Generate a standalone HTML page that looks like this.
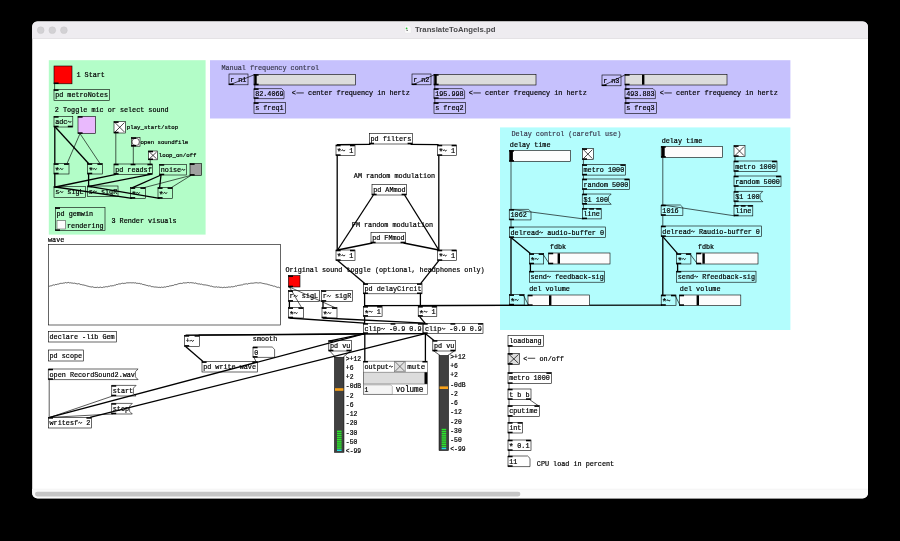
<!DOCTYPE html>
<html><head><meta charset="utf-8"><title>TranslateToAngels.pd</title>
<style>
html,body{margin:0;padding:0;background:#000;}
body{width:900px;height:541px;overflow:hidden;}
svg{display:block;}
text.m{font-family:"Liberation Mono",monospace;white-space:pre;}
svg{will-change:transform;}
text.s{font-family:"Liberation Sans",sans-serif;}
</style></head><body>
<svg width="900" height="541" viewBox="0 0 900 541">
<rect width="900" height="541" fill="#000"/>
<clipPath id="wc"><rect x="32.1" y="21.3" width="835.9" height="477.09999999999997" rx="5.5" ry="5.5"/></clipPath>
<g clip-path="url(#wc)">
<rect x="32.10" y="21.30" width="835.90" height="477.10" fill="#fff" />
<rect x="32.10" y="21.30" width="835.90" height="17.30" fill="#eeecf0" />
<rect x="32.10" y="38.20" width="835.90" height="0.60" fill="#d9d8db" />
<rect x="32.10" y="489.00" width="835.90" height="10.00" fill="#fafafa" />
<rect x="32.10" y="488.80" width="835.90" height="0.50" fill="#ededed" />
<rect x="35" y="491.7" width="485.4" height="4.8" rx="2.4" fill="#c6c6c6"/>
</g>
<circle cx="40.7" cy="30.2" r="3.4" fill="#d2d1d4" stroke="#c4c3c6" stroke-width="0.4"/>
<circle cx="52.3" cy="30.2" r="3.4" fill="#d2d1d4" stroke="#c4c3c6" stroke-width="0.4"/>
<circle cx="63.9" cy="30.2" r="3.4" fill="#d2d1d4" stroke="#c4c3c6" stroke-width="0.4"/>
<text class="s" x="415.00" y="32.20" font-size="7.7" fill="#4a4a4c" font-weight="bold" textLength="80.4" lengthAdjust="spacingAndGlyphs">TranslateToAngels.pd</text>
<path d="M405 25.8 h4 l2 2 v5.2 h-6z" fill="#fbfbfb" stroke="#e2e2e4" stroke-width="0.3"/>
<circle cx="406.6" cy="28.4" r="0.85" fill="#22c032"/>
<rect x="406.4" y="29.9" width="1.6" height="0.8" fill="#555"/>
<rect x="48.80" y="60.20" width="156.80" height="174.40" fill="#b3fdc8" />
<rect x="210.00" y="60.20" width="580.40" height="58.30" fill="#c6c1fd" />
<rect x="500.00" y="127.40" width="290.40" height="202.60" fill="#b3fdfd" />
<rect x="54.00" y="66.00" width="18.00" height="17.80" fill="#ff0000" stroke="#000" stroke-width="0.6" />
<rect x="53.80" y="82.50" width="4.80" height="1.50" fill="#000" />
<line x1="54.60" y1="84.00" x2="54.60" y2="89.50" stroke="#000" stroke-width="0.65"/>
<text class="m" transform="translate(76.45,76.60) scale(1,1.07)" font-size="6.78" fill="#000"  stroke="#000" stroke-width="0.2">1 Start</text>
<rect x="54.00" y="89.60" width="55.40" height="10.80" fill="none" stroke="#000" stroke-width="0.6" />
<rect x="53.80" y="89.40" width="4.80" height="1.50" fill="#000" />
<text class="m" transform="translate(55.15,97.10) scale(1,1.07)" font-size="6.78" fill="#000"  stroke="#000" stroke-width="0.2">pd metroNotes</text>
<text class="m" transform="translate(54.85,111.60) scale(1,1.07)" font-size="6.78" fill="#000"  stroke="#000" stroke-width="0.2">2 Toggle mic or select sound</text>
<rect x="54.00" y="116.40" width="18.80" height="10.60" fill="none" stroke="#000" stroke-width="0.6" />
<rect x="53.80" y="116.20" width="4.80" height="1.50" fill="#000" />
<rect x="53.80" y="125.70" width="4.80" height="1.50" fill="#000" />
<rect x="67.80" y="125.70" width="4.80" height="1.50" fill="#000" />
<path d="M67.71,122.30 C68.26,121.00 68.91,121.15 69.41,121.80 S70.56,122.60 71.11,121.30" fill="none" stroke="#000" stroke-width="1.00"/>
<text class="m" transform="translate(55.15,123.90) scale(1,1.07)" font-size="6.78" fill="#000"  stroke="#000" stroke-width="0.2">adc </text>
<rect x="78.00" y="116.40" width="17.60" height="17.20" fill="#e9b9fd" stroke="#000" stroke-width="0.6" />
<rect x="77.80" y="116.20" width="4.80" height="1.50" fill="#000" />
<rect x="77.80" y="132.30" width="4.80" height="1.50" fill="#000" />
<rect x="114.00" y="121.60" width="11.40" height="11.40" fill="#fff" stroke="#000" stroke-width="0.6" />
<line x1="115.00" y1="122.60" x2="124.40" y2="132.00" stroke="#000" stroke-width="0.7"/>
<line x1="115.00" y1="132.00" x2="124.40" y2="122.60" stroke="#000" stroke-width="0.7"/>
<rect x="113.80" y="121.40" width="4.80" height="1.50" fill="#000" />
<rect x="113.80" y="131.70" width="4.80" height="1.50" fill="#000" />
<text class="m" transform="translate(126.85,128.80) scale(1,1.07)" font-size="5.7" fill="#000"  stroke="#000" stroke-width="0.2">play_start/stop</text>
<rect x="131.40" y="137.60" width="8.60" height="8.60" fill="#fff" stroke="#000" stroke-width="0.6" />
<circle cx="135.70" cy="141.90" r="3.70" fill="#fff" stroke="#000" stroke-width="0.6"/>
<rect x="131.20" y="137.40" width="4.80" height="1.50" fill="#000" />
<rect x="131.20" y="144.90" width="4.80" height="1.50" fill="#000" />
<text class="m" transform="translate(140.45,143.60) scale(1,1.07)" font-size="5.7" fill="#000"  stroke="#000" stroke-width="0.2">open soundfile</text>
<rect x="148.40" y="151.00" width="9.20" height="8.80" fill="#fff" stroke="#000" stroke-width="0.6" />
<line x1="149.40" y1="152.00" x2="156.60" y2="158.80" stroke="#000" stroke-width="0.7"/>
<line x1="149.40" y1="158.80" x2="156.60" y2="152.00" stroke="#000" stroke-width="0.7"/>
<rect x="148.20" y="150.80" width="4.80" height="1.50" fill="#000" />
<rect x="148.20" y="158.50" width="4.80" height="1.50" fill="#000" />
<text class="m" transform="translate(158.85,156.60) scale(1,1.07)" font-size="5.7" fill="#000"  stroke="#000" stroke-width="0.2">loop_on/off</text>
<rect x="54.00" y="163.60" width="15.00" height="10.40" fill="none" stroke="#000" stroke-width="0.6" />
<rect x="53.80" y="163.40" width="4.80" height="1.50" fill="#000" />
<rect x="64.00" y="163.40" width="4.80" height="1.50" fill="#000" />
<rect x="53.80" y="172.70" width="4.80" height="1.50" fill="#000" />
<path d="M59.57,169.50 C60.12,168.20 60.77,168.35 61.27,169.00 S62.42,169.80 62.97,168.50" fill="none" stroke="#000" stroke-width="1.00"/>
<text class="m" transform="translate(55.15,171.10) scale(1,1.07)" font-size="6.78" fill="#000"  stroke="#000" stroke-width="0.2"><tspan dy="2.7" dx="-0.55" font-size="9">*</tspan><tspan dy="-2.7" dx="-0.8">​</tspan> </text>
<rect x="87.60" y="163.60" width="14.80" height="10.40" fill="none" stroke="#000" stroke-width="0.6" />
<rect x="87.40" y="163.40" width="4.80" height="1.50" fill="#000" />
<rect x="97.40" y="163.40" width="4.80" height="1.50" fill="#000" />
<rect x="87.40" y="172.70" width="4.80" height="1.50" fill="#000" />
<path d="M93.17,169.50 C93.72,168.20 94.37,168.35 94.87,169.00 S96.02,169.80 96.57,168.50" fill="none" stroke="#000" stroke-width="1.00"/>
<text class="m" transform="translate(88.75,171.10) scale(1,1.07)" font-size="6.78" fill="#000"  stroke="#000" stroke-width="0.2"><tspan dy="2.7" dx="-0.55" font-size="9">*</tspan><tspan dy="-2.7" dx="-0.8">​</tspan> </text>
<rect x="114.00" y="164.00" width="38.40" height="10.40" fill="none" stroke="#000" stroke-width="0.6" />
<rect x="113.80" y="163.80" width="4.80" height="1.50" fill="#000" />
<rect x="130.60" y="163.80" width="4.80" height="1.50" fill="#000" />
<rect x="147.40" y="163.80" width="4.80" height="1.50" fill="#000" />
<rect x="113.80" y="173.10" width="4.80" height="1.50" fill="#000" />
<rect x="147.40" y="173.10" width="4.80" height="1.50" fill="#000" />
<text class="m" transform="translate(115.15,171.50) scale(1,1.07)" font-size="6.78" fill="#000"  stroke="#000" stroke-width="0.2">pd readsf</text>
<rect x="159.60" y="164.40" width="26.80" height="10.60" fill="none" stroke="#000" stroke-width="0.6" />
<rect x="159.40" y="164.20" width="4.80" height="1.50" fill="#000" />
<rect x="159.40" y="173.70" width="4.80" height="1.50" fill="#000" />
<path d="M181.44,170.30 C181.99,169.00 182.64,169.15 183.14,169.80 S184.29,170.60 184.84,169.30" fill="none" stroke="#000" stroke-width="1.00"/>
<text class="m" transform="translate(160.75,171.90) scale(1,1.07)" font-size="6.78" fill="#000"  stroke="#000" stroke-width="0.2">noise </text>
<rect x="190.00" y="163.60" width="11.60" height="11.80" fill="#a0a0a0" stroke="#000" stroke-width="0.6" />
<rect x="189.80" y="163.40" width="4.80" height="1.50" fill="#000" />
<rect x="189.80" y="174.10" width="4.80" height="1.50" fill="#000" />
<rect x="54.00" y="186.60" width="31.40" height="10.80" fill="none" stroke="#000" stroke-width="0.6" />
<rect x="53.80" y="186.40" width="4.80" height="1.50" fill="#000" />
<path d="M59.57,192.50 C60.12,191.20 60.77,191.35 61.27,192.00 S62.42,192.80 62.97,191.50" fill="none" stroke="#000" stroke-width="1.00"/>
<text class="m" transform="translate(55.15,194.10) scale(1,1.07)" font-size="6.78" fill="#000"  stroke="#000" stroke-width="0.2">s  sigL</text>
<rect x="87.60" y="186.00" width="30.40" height="10.60" fill="none" stroke="#000" stroke-width="0.6" />
<rect x="87.40" y="185.80" width="4.80" height="1.50" fill="#000" />
<path d="M93.17,191.90 C93.72,190.60 94.37,190.75 94.87,191.40 S96.02,192.20 96.57,190.90" fill="none" stroke="#000" stroke-width="1.00"/>
<text class="m" transform="translate(88.75,193.50) scale(1,1.07)" font-size="6.78" fill="#000"  stroke="#000" stroke-width="0.2">s  sigR</text>
<rect x="130.60" y="187.60" width="14.80" height="10.80" fill="none" stroke="#000" stroke-width="0.6" />
<rect x="130.40" y="187.40" width="4.80" height="1.50" fill="#000" />
<rect x="140.40" y="187.40" width="4.80" height="1.50" fill="#000" />
<rect x="130.40" y="197.10" width="4.80" height="1.50" fill="#000" />
<path d="M136.17,193.50 C136.72,192.20 137.37,192.35 137.87,193.00 S139.02,193.80 139.57,192.50" fill="none" stroke="#000" stroke-width="1.00"/>
<text class="m" transform="translate(131.75,195.10) scale(1,1.07)" font-size="6.78" fill="#000"  stroke="#000" stroke-width="0.2"><tspan dy="2.7" dx="-0.55" font-size="9">*</tspan><tspan dy="-2.7" dx="-0.8">​</tspan> </text>
<rect x="158.00" y="187.60" width="14.60" height="10.80" fill="none" stroke="#000" stroke-width="0.6" />
<rect x="157.80" y="187.40" width="4.80" height="1.50" fill="#000" />
<rect x="167.60" y="187.40" width="4.80" height="1.50" fill="#000" />
<rect x="157.80" y="197.10" width="4.80" height="1.50" fill="#000" />
<path d="M163.57,193.50 C164.12,192.20 164.77,192.35 165.27,193.00 S166.42,193.80 166.97,192.50" fill="none" stroke="#000" stroke-width="1.00"/>
<text class="m" transform="translate(159.15,195.10) scale(1,1.07)" font-size="6.78" fill="#000"  stroke="#000" stroke-width="0.2"><tspan dy="2.7" dx="-0.55" font-size="9">*</tspan><tspan dy="-2.7" dx="-0.8">​</tspan> </text>
<line x1="54.80" y1="127.00" x2="54.80" y2="163.60" stroke="#000" stroke-width="1.3"/>
<line x1="55.20" y1="127.00" x2="88.80" y2="163.80" stroke="#000" stroke-width="1.3"/>
<line x1="80.00" y1="133.60" x2="67.00" y2="163.60" stroke="#000" stroke-width="0.65"/>
<line x1="80.00" y1="133.60" x2="100.00" y2="163.60" stroke="#000" stroke-width="0.65"/>
<line x1="115.80" y1="133.00" x2="115.80" y2="164.00" stroke="#000" stroke-width="0.65"/>
<line x1="133.30" y1="146.20" x2="133.30" y2="164.00" stroke="#000" stroke-width="0.65"/>
<line x1="150.20" y1="159.80" x2="150.20" y2="164.00" stroke="#000" stroke-width="0.65"/>
<line x1="54.80" y1="174.00" x2="54.80" y2="186.60" stroke="#000" stroke-width="1.3"/>
<line x1="88.60" y1="174.00" x2="88.60" y2="186.00" stroke="#000" stroke-width="1.3"/>
<line x1="116.00" y1="174.40" x2="55.50" y2="187.00" stroke="#000" stroke-width="1.3"/>
<line x1="150.50" y1="174.40" x2="89.00" y2="186.40" stroke="#000" stroke-width="1.3"/>
<line x1="161.00" y1="175.00" x2="132.00" y2="187.80" stroke="#000" stroke-width="1.3"/>
<line x1="161.00" y1="175.00" x2="159.60" y2="187.80" stroke="#000" stroke-width="1.3"/>
<line x1="191.00" y1="175.40" x2="143.40" y2="187.80" stroke="#000" stroke-width="0.65"/>
<line x1="191.00" y1="175.40" x2="171.00" y2="187.80" stroke="#000" stroke-width="0.65"/>
<line x1="132.00" y1="198.40" x2="55.50" y2="187.00" stroke="#000" stroke-width="1.3"/>
<line x1="159.60" y1="198.40" x2="89.00" y2="186.40" stroke="#000" stroke-width="1.3"/>
<rect x="55.40" y="207.60" width="49.60" height="23.00" fill="none" stroke="#000" stroke-width="0.6" />
<rect x="55.20" y="207.40" width="4.80" height="1.50" fill="#000" />
<rect x="55.20" y="229.30" width="4.80" height="1.50" fill="#000" />
<text class="m" transform="translate(56.45,215.80) scale(1,1.07)" font-size="6.78" fill="#000"  stroke="#000" stroke-width="0.2">pd gemwin</text>
<rect x="57.00" y="220.60" width="8.60" height="8.40" fill="#fcfcfc" stroke="#555" stroke-width="0.6" />
<text class="m" transform="translate(67.05,228.10) scale(1,1.07)" font-size="6.78" fill="#000"  stroke="#000" stroke-width="0.2">rendering</text>
<text class="m" transform="translate(111.45,222.50) scale(1,1.07)" font-size="6.78" fill="#000"  stroke="#000" stroke-width="0.2">3 Render visuals</text>
<text class="m" transform="translate(48.05,241.80) scale(1,1.07)" font-size="6.78" fill="#000"  stroke="#000" stroke-width="0.2">wave</text>
<rect x="48.40" y="244.40" width="232.20" height="80.60" fill="#fff" stroke="#000" stroke-width="0.6" />
<polyline points="48.8,286.19 49.6,286.19 50.4,285.90 51.2,285.84 52.0,285.65 52.8,285.10 53.6,284.86 54.4,285.15 55.2,284.59 56.0,284.37 56.8,284.62 57.6,284.11 58.4,284.14 59.2,283.74 60.0,283.67 60.8,283.22 61.6,283.36 62.4,283.37 63.2,283.05 64.0,283.08 64.8,282.95 65.6,282.52 66.4,282.89 67.2,282.76 68.0,282.58 68.8,282.43 69.6,282.95 70.4,282.75 71.2,282.95 72.0,283.12 72.8,283.10 73.6,283.32 74.4,283.11 75.2,283.48 76.0,283.40 76.8,283.84 77.6,283.95 78.4,283.65 79.2,283.84 80.0,284.06 80.8,284.69 81.6,284.56 82.4,284.86 83.2,284.86 84.0,285.17 84.8,285.29 85.6,285.46 86.4,285.78 87.2,285.96 88.0,286.33 88.8,286.36 89.6,286.67 90.4,286.78 91.2,287.00 92.0,286.94 92.8,286.75 93.6,287.27 94.4,287.43 95.2,287.47 96.0,287.33 96.8,287.47 97.6,287.20 98.4,287.59 99.2,287.44 100.0,287.26 100.8,287.10 101.6,287.54 102.4,287.56 103.2,286.96 104.0,287.30 104.8,286.98 105.6,286.71 106.4,286.68 107.2,286.84 108.0,286.76 108.8,286.12 109.6,286.31 110.4,285.80 111.2,286.04 112.0,285.63 112.8,285.78 113.6,285.66 114.4,285.19 115.2,285.30 116.0,284.71 116.8,284.38 117.6,284.52 118.4,284.00 119.2,283.93 120.0,283.89 120.8,283.85 121.6,283.43 122.4,283.21 123.2,283.58 124.0,283.12 124.8,283.40 125.6,283.26 126.4,282.86 127.2,282.84 128.0,282.81 128.8,282.84 129.6,282.78 130.4,282.74 131.2,282.77 132.0,282.98 132.8,282.75 133.6,282.75 134.4,282.99 135.2,282.78 136.0,282.92 136.8,283.44 137.6,283.29 138.4,283.44 139.2,283.27 140.0,283.68 140.8,283.95 141.6,283.80 142.4,284.35 143.2,284.55 144.0,284.41 144.8,284.95 145.6,285.06 146.4,285.39 147.2,285.39 148.0,285.80 148.8,286.02 149.6,285.77 150.4,285.98 151.2,286.52 152.0,286.85 152.8,286.57 153.6,286.83 154.4,287.04 155.2,286.98 156.0,287.10 156.8,287.15 157.6,287.24 158.4,287.42 159.2,287.27 160.0,287.33 160.8,287.55 161.6,287.08 162.4,287.36 163.2,287.39 164.0,287.05 164.8,286.90 165.6,287.13 166.4,286.66 167.2,286.49 168.0,286.48 168.8,286.46 169.6,285.92 170.4,285.87 171.2,285.68 172.0,285.77 172.8,285.33 173.6,285.37 174.4,284.75 175.2,284.64 176.0,284.62 176.8,284.55 177.6,284.10 178.4,283.77 179.2,283.53 180.0,283.60 180.8,283.24 181.6,283.46 182.4,283.35 183.2,282.84 184.0,282.80 184.8,283.03 185.6,282.87 186.4,282.92 187.2,282.62 188.0,282.48 188.8,282.58 189.6,282.90 190.4,282.62 191.2,282.70 192.0,282.80 192.8,282.87 193.6,282.94 194.4,283.33 195.2,282.97 196.0,282.98 196.8,283.66 197.6,283.75 198.4,283.94 199.2,283.75 200.0,284.21 200.8,284.34 201.6,284.08 202.4,284.55 203.2,284.77 204.0,284.83 204.8,284.91 205.6,284.94 206.4,285.14 207.2,285.24 208.0,285.31 208.8,285.79 209.6,285.77 210.4,286.24 211.2,285.93 212.0,286.59 212.8,286.60 213.6,286.87 214.4,286.97 215.2,287.09 216.0,287.00 216.8,286.75 217.6,287.28 218.4,287.01 219.2,287.14 220.0,287.41 220.8,287.37 221.6,287.33 222.4,287.66 223.2,287.47 224.0,287.30 224.8,287.22 225.6,287.56 226.4,287.28 227.2,287.41 228.0,287.09 228.8,286.92 229.6,287.04 230.4,287.11 231.2,286.62 232.0,286.88 232.8,286.84 233.6,286.64 234.4,286.52 235.2,285.88 236.0,286.11 236.8,286.10 237.6,285.46 238.4,285.43 239.2,285.27 240.0,285.27 240.8,285.04 241.6,284.91 242.4,284.93 243.2,284.31 244.0,284.19 244.8,284.08 245.6,283.93 246.4,283.75 247.2,284.16 248.0,283.96 248.8,283.38 249.6,283.51 250.4,283.29 251.2,283.20 252.0,283.13 252.8,283.23 253.6,283.13 254.4,282.93 255.2,282.79 256.0,282.83 256.8,282.69 257.6,282.93 258.4,283.03 259.2,282.85 260.0,282.72 260.8,282.85 261.6,283.05 262.4,283.30 263.2,283.54 264.0,283.44 264.8,283.86 265.6,283.94 266.4,284.02 267.2,284.19 268.0,284.48 268.8,284.83 269.6,284.89 270.4,285.29 271.2,285.39 272.0,285.49 272.8,285.90 273.6,286.22 274.4,286.07 275.2,286.50 276.0,286.70 276.8,287.16 277.6,287.37 278.4,287.18 279.2,287.64 280.0,287.69" fill="none" stroke="#222" stroke-width="0.7"/>
<rect x="48.40" y="331.40" width="68.20" height="10.60" fill="none" stroke="#000" stroke-width="0.6" />
<text class="m" transform="translate(49.55,338.90) scale(1,1.07)" font-size="6.78" fill="#000"  stroke="#000" stroke-width="0.2">declare -lib Gem</text>
<rect x="48.40" y="350.00" width="35.00" height="11.00" fill="none" stroke="#000" stroke-width="0.6" />
<text class="m" transform="translate(49.55,357.50) scale(1,1.07)" font-size="6.78" fill="#000"  stroke="#000" stroke-width="0.2">pd scope</text>
<polygon points="48.40,369.00 138.10,369.00 135.40,371.70 135.40,376.90 138.10,379.60 48.40,379.60" fill="none" stroke="#000" stroke-width="0.6"/>
<rect x="48.20" y="368.80" width="4.80" height="1.50" fill="#000" />
<rect x="48.20" y="378.30" width="4.80" height="1.50" fill="#000" />
<text class="m" transform="translate(49.55,376.50) scale(1,1.07)" font-size="6.78" fill="#000"  stroke="#000" stroke-width="0.2">open RecordSound2.wav</text>
<polygon points="111.60,385.40 136.10,385.40 133.40,388.10 133.40,393.30 136.10,396.00 111.60,396.00" fill="none" stroke="#000" stroke-width="0.6"/>
<rect x="111.40" y="385.20" width="4.80" height="1.50" fill="#000" />
<rect x="111.40" y="394.70" width="4.80" height="1.50" fill="#000" />
<text class="m" transform="translate(112.75,392.90) scale(1,1.07)" font-size="6.78" fill="#000"  stroke="#000" stroke-width="0.2">start</text>
<polygon points="111.60,403.40 132.30,403.40 129.60,406.10 129.60,411.30 132.30,414.00 111.60,414.00" fill="none" stroke="#000" stroke-width="0.6"/>
<rect x="111.40" y="403.20" width="4.80" height="1.50" fill="#000" />
<rect x="111.40" y="412.70" width="4.80" height="1.50" fill="#000" />
<text class="m" transform="translate(112.75,410.90) scale(1,1.07)" font-size="6.78" fill="#000"  stroke="#000" stroke-width="0.2">stop</text>
<rect x="48.40" y="417.40" width="43.00" height="10.60" fill="none" stroke="#000" stroke-width="0.6" />
<rect x="48.20" y="417.20" width="4.80" height="1.50" fill="#000" />
<rect x="86.40" y="417.20" width="4.80" height="1.50" fill="#000" />
<path d="M78.38,423.30 C78.93,422.00 79.58,422.15 80.08,422.80 S81.23,423.60 81.78,422.30" fill="none" stroke="#000" stroke-width="1.00"/>
<text class="m" transform="translate(49.55,424.90) scale(1,1.07)" font-size="6.78" fill="#000"  stroke="#000" stroke-width="0.2">writesf  2</text>
<line x1="49.20" y1="379.60" x2="49.20" y2="417.40" stroke="#000" stroke-width="0.65"/>
<line x1="112.60" y1="396.00" x2="50.00" y2="417.40" stroke="#000" stroke-width="0.65"/>
<line x1="112.60" y1="414.00" x2="50.00" y2="417.40" stroke="#000" stroke-width="0.65"/>
<rect x="184.60" y="335.40" width="15.00" height="11.00" fill="none" stroke="#000" stroke-width="0.6" />
<rect x="184.40" y="335.20" width="4.80" height="1.50" fill="#000" />
<rect x="194.60" y="335.20" width="4.80" height="1.50" fill="#000" />
<rect x="184.40" y="345.10" width="4.80" height="1.50" fill="#000" />
<path d="M190.17,341.30 C190.72,340.00 191.37,340.15 191.87,340.80 S193.02,341.60 193.57,340.30" fill="none" stroke="#000" stroke-width="1.00"/>
<text class="m" transform="translate(185.75,342.90) scale(1,1.07)" font-size="6.78" fill="#000"  stroke="#000" stroke-width="0.2">+ </text>
<text class="m" transform="translate(252.85,340.60) scale(1,1.07)" font-size="6.78" fill="#000"  stroke="#000" stroke-width="0.2">smooth</text>
<polygon points="253.00,347.00 272.20,347.00 274.60,349.40 274.60,357.40 253.00,357.40" fill="none" stroke="#000" stroke-width="0.6"/>
<rect x="252.80" y="346.80" width="4.80" height="1.50" fill="#000" />
<rect x="252.80" y="356.10" width="4.80" height="1.50" fill="#000" />
<text class="m" transform="translate(254.15,354.50) scale(1,1.07)" font-size="6.78" fill="#000"  stroke="#000" stroke-width="0.2">0</text>
<rect x="202.00" y="361.60" width="55.40" height="10.40" fill="none" stroke="#000" stroke-width="0.6" />
<rect x="201.80" y="361.40" width="4.80" height="1.50" fill="#000" />
<rect x="252.40" y="361.40" width="4.80" height="1.50" fill="#000" />
<text class="m" transform="translate(203.15,369.10) scale(1,1.07)" font-size="6.78" fill="#000"  stroke="#000" stroke-width="0.2">pd write wave</text>
<line x1="185.60" y1="346.40" x2="203.00" y2="361.60" stroke="#000" stroke-width="1.3"/>
<line x1="254.00" y1="357.40" x2="256.00" y2="361.60" stroke="#000" stroke-width="0.65"/>
<text class="m" transform="translate(285.45,271.60) scale(1,1.07)" font-size="6.78" fill="#000"  stroke="#000" stroke-width="0.2">Original sound toggle (optional, headphones only)</text>
<rect x="288.40" y="275.60" width="11.60" height="11.40" fill="#ff0000" stroke="#000" stroke-width="0.6" />
<rect x="288.20" y="275.40" width="4.80" height="1.50" fill="#000" />
<rect x="288.20" y="285.70" width="4.80" height="1.50" fill="#000" />
<rect x="288.40" y="290.60" width="31.00" height="10.80" fill="none" stroke="#000" stroke-width="0.6" />
<rect x="288.20" y="290.40" width="4.80" height="1.50" fill="#000" />
<rect x="288.20" y="300.10" width="4.80" height="1.50" fill="#000" />
<path d="M293.97,296.50 C294.52,295.20 295.17,295.35 295.67,296.00 S296.82,296.80 297.37,295.50" fill="none" stroke="#000" stroke-width="1.00"/>
<text class="m" transform="translate(289.55,298.10) scale(1,1.07)" font-size="6.78" fill="#000"  stroke="#000" stroke-width="0.2">r  sigL</text>
<rect x="321.60" y="290.60" width="30.80" height="10.80" fill="none" stroke="#000" stroke-width="0.6" />
<rect x="321.40" y="290.40" width="4.80" height="1.50" fill="#000" />
<rect x="321.40" y="300.10" width="4.80" height="1.50" fill="#000" />
<path d="M327.17,296.50 C327.72,295.20 328.37,295.35 328.87,296.00 S330.02,296.80 330.57,295.50" fill="none" stroke="#000" stroke-width="1.00"/>
<text class="m" transform="translate(322.75,298.10) scale(1,1.07)" font-size="6.78" fill="#000"  stroke="#000" stroke-width="0.2">r  sigR</text>
<rect x="288.40" y="307.60" width="15.00" height="10.40" fill="none" stroke="#000" stroke-width="0.6" />
<rect x="288.20" y="307.40" width="4.80" height="1.50" fill="#000" />
<rect x="298.40" y="307.40" width="4.80" height="1.50" fill="#000" />
<rect x="288.20" y="316.70" width="4.80" height="1.50" fill="#000" />
<path d="M293.97,313.50 C294.52,312.20 295.17,312.35 295.67,313.00 S296.82,313.80 297.37,312.50" fill="none" stroke="#000" stroke-width="1.00"/>
<text class="m" transform="translate(289.55,315.10) scale(1,1.07)" font-size="6.78" fill="#000"  stroke="#000" stroke-width="0.2"><tspan dy="2.7" dx="-0.55" font-size="9">*</tspan><tspan dy="-2.7" dx="-0.8">​</tspan> </text>
<rect x="322.00" y="307.60" width="15.00" height="10.40" fill="none" stroke="#000" stroke-width="0.6" />
<rect x="321.80" y="307.40" width="4.80" height="1.50" fill="#000" />
<rect x="332.00" y="307.40" width="4.80" height="1.50" fill="#000" />
<rect x="321.80" y="316.70" width="4.80" height="1.50" fill="#000" />
<path d="M327.57,313.50 C328.12,312.20 328.77,312.35 329.27,313.00 S330.42,313.80 330.97,312.50" fill="none" stroke="#000" stroke-width="1.00"/>
<text class="m" transform="translate(323.15,315.10) scale(1,1.07)" font-size="6.78" fill="#000"  stroke="#000" stroke-width="0.2"><tspan dy="2.7" dx="-0.55" font-size="9">*</tspan><tspan dy="-2.7" dx="-0.8">​</tspan> </text>
<line x1="289.40" y1="287.00" x2="301.60" y2="307.60" stroke="#000" stroke-width="0.65"/>
<line x1="289.40" y1="287.00" x2="335.00" y2="307.60" stroke="#000" stroke-width="0.65"/>
<line x1="289.40" y1="301.40" x2="289.40" y2="307.60" stroke="#000" stroke-width="1.3"/>
<line x1="323.00" y1="301.40" x2="323.00" y2="307.60" stroke="#000" stroke-width="1.3"/>
<rect x="369.40" y="133.60" width="43.20" height="10.40" fill="none" stroke="#000" stroke-width="0.6" />
<rect x="369.20" y="142.70" width="4.80" height="1.50" fill="#000" />
<rect x="407.60" y="142.70" width="4.80" height="1.50" fill="#000" />
<text class="m" transform="translate(370.55,141.10) scale(1,1.07)" font-size="6.78" fill="#000"  stroke="#000" stroke-width="0.2">pd filters</text>
<rect x="336.00" y="145.00" width="19.00" height="10.60" fill="none" stroke="#000" stroke-width="0.6" />
<rect x="335.80" y="144.80" width="4.80" height="1.50" fill="#000" />
<rect x="350.00" y="144.80" width="4.80" height="1.50" fill="#000" />
<rect x="335.80" y="154.30" width="4.80" height="1.50" fill="#000" />
<path d="M341.57,150.90 C342.12,149.60 342.77,149.75 343.27,150.40 S344.42,151.20 344.97,149.90" fill="none" stroke="#000" stroke-width="1.00"/>
<text class="m" transform="translate(337.15,152.50) scale(1,1.07)" font-size="6.78" fill="#000"  stroke="#000" stroke-width="0.2"><tspan dy="2.7" dx="-0.55" font-size="9">*</tspan><tspan dy="-2.7" dx="-0.8">​</tspan>  1</text>
<rect x="437.60" y="145.00" width="19.00" height="10.60" fill="none" stroke="#000" stroke-width="0.6" />
<rect x="437.40" y="144.80" width="4.80" height="1.50" fill="#000" />
<rect x="451.60" y="144.80" width="4.80" height="1.50" fill="#000" />
<rect x="437.40" y="154.30" width="4.80" height="1.50" fill="#000" />
<path d="M443.17,150.90 C443.72,149.60 444.37,149.75 444.87,150.40 S446.02,151.20 446.57,149.90" fill="none" stroke="#000" stroke-width="1.00"/>
<text class="m" transform="translate(438.75,152.50) scale(1,1.07)" font-size="6.78" fill="#000"  stroke="#000" stroke-width="0.2"><tspan dy="2.7" dx="-0.55" font-size="9">*</tspan><tspan dy="-2.7" dx="-0.8">​</tspan>  1</text>
<text class="m" transform="translate(353.85,178.00) scale(1,1.07)" font-size="6.78" fill="#000"  stroke="#000" stroke-width="0.2">AM random modulation</text>
<rect x="372.00" y="184.40" width="34.60" height="10.60" fill="none" stroke="#000" stroke-width="0.6" />
<rect x="371.80" y="193.70" width="4.80" height="1.50" fill="#000" />
<rect x="401.60" y="193.70" width="4.80" height="1.50" fill="#000" />
<text class="m" transform="translate(373.15,191.90) scale(1,1.07)" font-size="6.78" fill="#000"  stroke="#000" stroke-width="0.2">pd AMmod</text>
<text class="m" transform="translate(351.85,226.60) scale(1,1.07)" font-size="6.78" fill="#000"  stroke="#000" stroke-width="0.2">FM random modulation</text>
<rect x="371.00" y="232.60" width="34.60" height="10.40" fill="none" stroke="#000" stroke-width="0.6" />
<rect x="370.80" y="241.70" width="4.80" height="1.50" fill="#000" />
<rect x="400.60" y="241.70" width="4.80" height="1.50" fill="#000" />
<text class="m" transform="translate(372.15,240.10) scale(1,1.07)" font-size="6.78" fill="#000"  stroke="#000" stroke-width="0.2">pd FMmod</text>
<rect x="336.00" y="250.00" width="19.00" height="10.60" fill="none" stroke="#000" stroke-width="0.6" />
<rect x="335.80" y="249.80" width="4.80" height="1.50" fill="#000" />
<rect x="350.00" y="249.80" width="4.80" height="1.50" fill="#000" />
<rect x="335.80" y="259.30" width="4.80" height="1.50" fill="#000" />
<path d="M341.57,255.90 C342.12,254.60 342.77,254.75 343.27,255.40 S344.42,256.20 344.97,254.90" fill="none" stroke="#000" stroke-width="1.00"/>
<text class="m" transform="translate(337.15,257.50) scale(1,1.07)" font-size="6.78" fill="#000"  stroke="#000" stroke-width="0.2"><tspan dy="2.7" dx="-0.55" font-size="9">*</tspan><tspan dy="-2.7" dx="-0.8">​</tspan>  1</text>
<rect x="437.60" y="250.00" width="19.00" height="10.60" fill="none" stroke="#000" stroke-width="0.6" />
<rect x="437.40" y="249.80" width="4.80" height="1.50" fill="#000" />
<rect x="451.60" y="249.80" width="4.80" height="1.50" fill="#000" />
<rect x="437.40" y="259.30" width="4.80" height="1.50" fill="#000" />
<path d="M443.17,255.90 C443.72,254.60 444.37,254.75 444.87,255.40 S446.02,256.20 446.57,254.90" fill="none" stroke="#000" stroke-width="1.00"/>
<text class="m" transform="translate(438.75,257.50) scale(1,1.07)" font-size="6.78" fill="#000"  stroke="#000" stroke-width="0.2"><tspan dy="2.7" dx="-0.55" font-size="9">*</tspan><tspan dy="-2.7" dx="-0.8">​</tspan>  1</text>
<rect x="363.40" y="283.60" width="58.60" height="10.20" fill="none" stroke="#000" stroke-width="0.6" />
<rect x="363.20" y="283.40" width="4.80" height="1.50" fill="#000" />
<rect x="417.00" y="283.40" width="4.80" height="1.50" fill="#000" />
<rect x="363.20" y="292.50" width="4.80" height="1.50" fill="#000" />
<rect x="417.00" y="292.50" width="4.80" height="1.50" fill="#000" />
<text class="m" transform="translate(364.55,291.10) scale(1,1.07)" font-size="6.78" fill="#000"  stroke="#000" stroke-width="0.2">pd delayCircit</text>
<rect x="363.40" y="306.30" width="18.70" height="10.10" fill="none" stroke="#000" stroke-width="0.6" />
<rect x="363.20" y="306.10" width="4.80" height="1.50" fill="#000" />
<rect x="377.10" y="306.10" width="4.80" height="1.50" fill="#000" />
<rect x="363.20" y="315.10" width="4.80" height="1.50" fill="#000" />
<path d="M368.97,312.20 C369.52,310.90 370.17,311.05 370.67,311.70 S371.82,312.50 372.37,311.20" fill="none" stroke="#000" stroke-width="1.00"/>
<text class="m" transform="translate(364.55,313.80) scale(1,1.07)" font-size="6.78" fill="#000"  stroke="#000" stroke-width="0.2"><tspan dy="2.7" dx="-0.55" font-size="9">*</tspan><tspan dy="-2.7" dx="-0.8">​</tspan>  1</text>
<rect x="418.20" y="306.30" width="18.60" height="10.10" fill="none" stroke="#000" stroke-width="0.6" />
<rect x="418.00" y="306.10" width="4.80" height="1.50" fill="#000" />
<rect x="431.80" y="306.10" width="4.80" height="1.50" fill="#000" />
<rect x="418.00" y="315.10" width="4.80" height="1.50" fill="#000" />
<path d="M423.77,312.20 C424.32,310.90 424.97,311.05 425.47,311.70 S426.62,312.50 427.17,311.20" fill="none" stroke="#000" stroke-width="1.00"/>
<text class="m" transform="translate(419.35,313.80) scale(1,1.07)" font-size="6.78" fill="#000"  stroke="#000" stroke-width="0.2"><tspan dy="2.7" dx="-0.55" font-size="9">*</tspan><tspan dy="-2.7" dx="-0.8">​</tspan>  1</text>
<rect x="363.40" y="323.40" width="59.50" height="10.20" fill="none" stroke="#000" stroke-width="0.6" />
<rect x="363.20" y="323.20" width="4.80" height="1.50" fill="#000" />
<rect x="390.55" y="323.20" width="4.80" height="1.50" fill="#000" />
<rect x="417.90" y="323.20" width="4.80" height="1.50" fill="#000" />
<rect x="363.20" y="332.30" width="4.80" height="1.50" fill="#000" />
<path d="M381.17,329.30 C381.72,328.00 382.37,328.15 382.87,328.80 S384.02,329.60 384.57,328.30" fill="none" stroke="#000" stroke-width="1.00"/>
<text class="m" transform="translate(364.55,330.90) scale(1,1.07)" font-size="6.78" fill="#000"  stroke="#000" stroke-width="0.2">clip  -0.9 0.9</text>
<rect x="423.10" y="323.40" width="59.90" height="10.20" fill="none" stroke="#000" stroke-width="0.6" />
<rect x="422.90" y="323.20" width="4.80" height="1.50" fill="#000" />
<rect x="450.45" y="323.20" width="4.80" height="1.50" fill="#000" />
<rect x="478.00" y="323.20" width="4.80" height="1.50" fill="#000" />
<rect x="422.90" y="332.30" width="4.80" height="1.50" fill="#000" />
<path d="M441.57,329.30 C442.12,328.00 442.77,328.15 443.27,328.80 S444.42,329.60 444.97,328.30" fill="none" stroke="#000" stroke-width="1.00"/>
<text class="m" transform="translate(424.95,330.90) scale(1,1.07)" font-size="6.78" fill="#000"  stroke="#000" stroke-width="0.2">clip  -0.9 0.9</text>
<rect x="328.80" y="340.60" width="22.60" height="10.40" fill="none" stroke="#000" stroke-width="0.6" />
<rect x="328.60" y="340.40" width="4.80" height="1.50" fill="#000" />
<rect x="328.60" y="349.70" width="4.80" height="1.50" fill="#000" />
<rect x="346.40" y="349.70" width="4.80" height="1.50" fill="#000" />
<text class="m" transform="translate(329.95,348.10) scale(1,1.07)" font-size="6.78" fill="#000"  stroke="#000" stroke-width="0.2">pd vu</text>
<rect x="432.80" y="340.40" width="22.60" height="10.60" fill="none" stroke="#000" stroke-width="0.6" />
<rect x="432.60" y="340.20" width="4.80" height="1.50" fill="#000" />
<rect x="432.60" y="349.70" width="4.80" height="1.50" fill="#000" />
<rect x="450.40" y="349.70" width="4.80" height="1.50" fill="#000" />
<text class="m" transform="translate(433.95,347.90) scale(1,1.07)" font-size="6.78" fill="#000"  stroke="#000" stroke-width="0.2">pd vu</text>
<line x1="370.40" y1="144.40" x2="337.00" y2="144.60" stroke="#000" stroke-width="1.3"/>
<line x1="410.60" y1="144.40" x2="438.60" y2="144.60" stroke="#000" stroke-width="1.3"/>
<line x1="337.20" y1="155.60" x2="337.20" y2="250.00" stroke="#000" stroke-width="1.3"/>
<line x1="438.80" y1="155.60" x2="438.80" y2="250.00" stroke="#000" stroke-width="1.3"/>
<line x1="373.40" y1="195.00" x2="337.60" y2="250.00" stroke="#000" stroke-width="1.3"/>
<line x1="404.60" y1="195.00" x2="438.80" y2="250.00" stroke="#000" stroke-width="1.3"/>
<line x1="372.40" y1="243.00" x2="337.60" y2="250.00" stroke="#000" stroke-width="1.3"/>
<line x1="403.60" y1="243.00" x2="438.80" y2="250.00" stroke="#000" stroke-width="1.3"/>
<line x1="337.60" y1="260.60" x2="364.80" y2="283.60" stroke="#000" stroke-width="1.3"/>
<line x1="438.80" y1="260.60" x2="420.60" y2="283.60" stroke="#000" stroke-width="1.3"/>
<line x1="364.60" y1="293.80" x2="364.60" y2="306.40" stroke="#000" stroke-width="1.3"/>
<line x1="420.40" y1="293.80" x2="420.40" y2="306.40" stroke="#000" stroke-width="1.3"/>
<line x1="364.60" y1="316.80" x2="364.60" y2="323.40" stroke="#000" stroke-width="1.3"/>
<line x1="419.80" y1="316.80" x2="425.20" y2="323.40" stroke="#000" stroke-width="1.3"/>
<line x1="289.40" y1="318.00" x2="364.60" y2="323.20" stroke="#000" stroke-width="1.3"/>
<line x1="323.00" y1="318.00" x2="425.20" y2="323.20" stroke="#000" stroke-width="1.3"/>
<line x1="510.60" y1="305.30" x2="364.60" y2="305.70" stroke="#000" stroke-width="1.3"/>
<line x1="662.00" y1="305.20" x2="420.00" y2="305.60" stroke="#000" stroke-width="1.3"/>
<line x1="364.80" y1="333.60" x2="185.60" y2="335.20" stroke="#000" stroke-width="1.3"/>
<line x1="425.20" y1="333.60" x2="198.60" y2="335.20" stroke="#000" stroke-width="1.3"/>
<line x1="364.80" y1="333.60" x2="49.60" y2="417.40" stroke="#000" stroke-width="1.3"/>
<line x1="425.20" y1="333.60" x2="90.00" y2="417.40" stroke="#000" stroke-width="1.3"/>
<line x1="364.80" y1="333.60" x2="330.00" y2="340.80" stroke="#000" stroke-width="1.3"/>
<line x1="425.20" y1="333.60" x2="434.00" y2="340.60" stroke="#000" stroke-width="1.3"/>
<line x1="364.80" y1="333.60" x2="364.80" y2="361.20" stroke="#000" stroke-width="1.3"/>
<line x1="425.40" y1="333.60" x2="425.40" y2="361.20" stroke="#000" stroke-width="1.3"/>
<rect x="334.40" y="357.20" width="9.60" height="95.20" fill="#404040" stroke="#000" stroke-width="0.5" />
<rect x="335.00" y="388.20" width="8.40" height="2.60" fill="#f9a21a" />
<rect x="337.00" y="430.60" width="4.60" height="1.50" fill="#2be62b" />
<rect x="337.00" y="432.70" width="4.60" height="1.50" fill="#2be62b" />
<rect x="337.00" y="434.80" width="4.60" height="1.50" fill="#2be62b" />
<rect x="337.00" y="436.90" width="4.60" height="1.50" fill="#2be62b" />
<rect x="337.00" y="439.00" width="4.60" height="1.50" fill="#2be62b" />
<rect x="337.00" y="441.10" width="4.60" height="1.50" fill="#2be62b" />
<rect x="337.00" y="443.20" width="4.60" height="1.50" fill="#2be62b" />
<rect x="337.00" y="445.30" width="4.60" height="1.50" fill="#2be62b" />
<rect x="337.00" y="447.40" width="4.60" height="1.50" fill="#2be62b" />
<rect x="337.00" y="449.50" width="4.60" height="1.50" fill="#1fe0e0" />
<text class="m" transform="translate(345.85,360.60) scale(1,1.07)" font-size="6.4" fill="#000"  stroke="#000" stroke-width="0.2">&gt;+12</text>
<text class="m" transform="translate(345.85,369.86) scale(1,1.07)" font-size="6.4" fill="#000"  stroke="#000" stroke-width="0.2">+6</text>
<text class="m" transform="translate(345.85,379.12) scale(1,1.07)" font-size="6.4" fill="#000"  stroke="#000" stroke-width="0.2">+2</text>
<text class="m" transform="translate(345.85,388.38) scale(1,1.07)" font-size="6.4" fill="#000"  stroke="#000" stroke-width="0.2">-0dB</text>
<text class="m" transform="translate(345.85,397.64) scale(1,1.07)" font-size="6.4" fill="#000"  stroke="#000" stroke-width="0.2">-2</text>
<text class="m" transform="translate(345.85,406.90) scale(1,1.07)" font-size="6.4" fill="#000"  stroke="#000" stroke-width="0.2">-6</text>
<text class="m" transform="translate(345.85,416.16) scale(1,1.07)" font-size="6.4" fill="#000"  stroke="#000" stroke-width="0.2">-12</text>
<text class="m" transform="translate(345.85,425.42) scale(1,1.07)" font-size="6.4" fill="#000"  stroke="#000" stroke-width="0.2">-20</text>
<text class="m" transform="translate(345.85,434.68) scale(1,1.07)" font-size="6.4" fill="#000"  stroke="#000" stroke-width="0.2">-30</text>
<text class="m" transform="translate(345.85,443.94) scale(1,1.07)" font-size="6.4" fill="#000"  stroke="#000" stroke-width="0.2">-50</text>
<text class="m" transform="translate(345.85,453.20) scale(1,1.07)" font-size="6.4" fill="#000"  stroke="#000" stroke-width="0.2">&lt;-99</text>
<rect x="439.00" y="355.40" width="9.60" height="95.20" fill="#404040" stroke="#000" stroke-width="0.5" />
<rect x="439.60" y="386.40" width="8.40" height="2.60" fill="#f9a21a" />
<rect x="441.60" y="428.80" width="4.60" height="1.50" fill="#2be62b" />
<rect x="441.60" y="430.90" width="4.60" height="1.50" fill="#2be62b" />
<rect x="441.60" y="433.00" width="4.60" height="1.50" fill="#2be62b" />
<rect x="441.60" y="435.10" width="4.60" height="1.50" fill="#2be62b" />
<rect x="441.60" y="437.20" width="4.60" height="1.50" fill="#2be62b" />
<rect x="441.60" y="439.30" width="4.60" height="1.50" fill="#2be62b" />
<rect x="441.60" y="441.40" width="4.60" height="1.50" fill="#2be62b" />
<rect x="441.60" y="443.50" width="4.60" height="1.50" fill="#2be62b" />
<rect x="441.60" y="445.60" width="4.60" height="1.50" fill="#2be62b" />
<rect x="441.60" y="447.70" width="4.60" height="1.50" fill="#1fe0e0" />
<text class="m" transform="translate(450.25,358.80) scale(1,1.07)" font-size="6.4" fill="#000"  stroke="#000" stroke-width="0.2">&gt;+12</text>
<text class="m" transform="translate(450.25,368.06) scale(1,1.07)" font-size="6.4" fill="#000"  stroke="#000" stroke-width="0.2">+6</text>
<text class="m" transform="translate(450.25,377.32) scale(1,1.07)" font-size="6.4" fill="#000"  stroke="#000" stroke-width="0.2">+2</text>
<text class="m" transform="translate(450.25,386.58) scale(1,1.07)" font-size="6.4" fill="#000"  stroke="#000" stroke-width="0.2">-0dB</text>
<text class="m" transform="translate(450.25,395.84) scale(1,1.07)" font-size="6.4" fill="#000"  stroke="#000" stroke-width="0.2">-2</text>
<text class="m" transform="translate(450.25,405.10) scale(1,1.07)" font-size="6.4" fill="#000"  stroke="#000" stroke-width="0.2">-6</text>
<text class="m" transform="translate(450.25,414.36) scale(1,1.07)" font-size="6.4" fill="#000"  stroke="#000" stroke-width="0.2">-12</text>
<text class="m" transform="translate(450.25,423.62) scale(1,1.07)" font-size="6.4" fill="#000"  stroke="#000" stroke-width="0.2">-20</text>
<text class="m" transform="translate(450.25,432.88) scale(1,1.07)" font-size="6.4" fill="#000"  stroke="#000" stroke-width="0.2">-30</text>
<text class="m" transform="translate(450.25,442.14) scale(1,1.07)" font-size="6.4" fill="#000"  stroke="#000" stroke-width="0.2">-50</text>
<text class="m" transform="translate(450.25,451.40) scale(1,1.07)" font-size="6.4" fill="#000"  stroke="#000" stroke-width="0.2">&lt;-99</text>
<line x1="329.80" y1="351.00" x2="335.40" y2="357.20" stroke="#000" stroke-width="0.65"/>
<line x1="350.40" y1="351.00" x2="343.20" y2="357.20" stroke="#000" stroke-width="0.65"/>
<line x1="433.80" y1="351.00" x2="440.00" y2="355.40" stroke="#000" stroke-width="0.65"/>
<line x1="454.40" y1="351.00" x2="447.80" y2="355.40" stroke="#000" stroke-width="0.65"/>
<rect x="363.40" y="361.20" width="64.00" height="33.40" fill="#fff" />
<path d="M389.21,367.00 C389.76,365.70 390.41,365.85 390.91,366.50 S392.06,367.30 392.61,366.00" fill="none" stroke="#000" stroke-width="1.00"/>
<text class="m" transform="translate(364.45,368.60) scale(1,1.07)" font-size="6.78" fill="#000"  stroke="#000" stroke-width="0.2">output </text>
<rect x="394.60" y="361.30" width="10.60" height="10.50" fill="#e0e0e0" stroke="#6a6a6a" stroke-width="0.6" />
<line x1="395.40" y1="362.00" x2="404.40" y2="371.00" stroke="#333" stroke-width="0.6"/>
<line x1="395.40" y1="371.00" x2="404.40" y2="362.00" stroke="#333" stroke-width="0.6"/>
<text class="m" transform="translate(407.25,368.50) scale(1,1.07)" font-size="7.5" fill="#000"  stroke="#000" stroke-width="0.2">mute</text>
<rect x="363.40" y="372.20" width="64.00" height="11.80" fill="#dcdcdc" stroke="#6a6a6a" stroke-width="0.6" />
<rect x="424.50" y="372.30" width="2.90" height="11.60" fill="#000" />
<polygon points="363.6,384.9 390.8,384.9 392.3,386.4 392.3,394.4 363.6,394.4" fill="#f5f5f5" stroke="#8a8a8a" stroke-width="0.55"/>
<text class="m" transform="translate(364.45,391.60) scale(1,1.07)" font-size="6.4" fill="#000"  stroke="#000" stroke-width="0.2">1</text>
<text class="m" transform="translate(395.65,391.60) scale(1,1.07)" font-size="7.7" fill="#000"  stroke="#000" stroke-width="0.2">volume</text>
<rect x="363.40" y="361.20" width="64.00" height="33.40" fill="none" stroke="#6a6a6a" stroke-width="0.7" />
<rect x="363.20" y="361.00" width="4.80" height="1.50" fill="#000" />
<rect x="422.40" y="361.00" width="4.80" height="1.50" fill="#000" />
<text class="m" transform="translate(221.45,70.00) scale(1,1.07)" font-size="6.78" fill="#3b3b50"  stroke="#3b3b50" stroke-width="0.2">Manual frequency control</text>
<rect x="229.00" y="74.00" width="19.00" height="10.80" fill="none" stroke="#000" stroke-width="0.6" />
<rect x="228.80" y="83.50" width="4.80" height="1.50" fill="#000" />
<text class="m" transform="translate(230.15,81.50) scale(1,1.07)" font-size="6.78" fill="#000"  stroke="#000" stroke-width="0.2">r n1</text>
<rect x="254.00" y="74.40" width="101.40" height="10.60" fill="#dcdcdc" stroke="#000" stroke-width="0.6" />
<rect x="254.30" y="74.70" width="2.40" height="10.00" fill="#000" />
<rect x="253.80" y="74.20" width="4.80" height="1.50" fill="#000" />
<rect x="253.80" y="83.70" width="4.80" height="1.50" fill="#000" />
<line x1="230.00" y1="84.80" x2="255.00" y2="74.40" stroke="#000" stroke-width="0.65"/>
<polygon points="254.00,88.60 281.60,88.60 284.00,91.00 284.00,98.60 254.00,98.60" fill="none" stroke="#000" stroke-width="0.6"/>
<rect x="253.80" y="88.40" width="4.80" height="1.50" fill="#000" />
<rect x="253.80" y="97.30" width="4.80" height="1.50" fill="#000" />
<text class="m" transform="translate(255.15,96.10) scale(1,1.07)" font-size="6.78" fill="#000"  stroke="#000" stroke-width="0.2">82.4069</text>
<text class="m" transform="translate(291.85,95.30) scale(1,1.07)" font-size="6.78" fill="#000"  stroke="#000" stroke-width="0.2">&lt;   center frequency in hertz</text>
<line x1="296.37" y1="92.95" x2="303.81" y2="92.95" stroke="#000" stroke-width="0.75"/>
<rect x="254.00" y="102.60" width="31.40" height="10.80" fill="none" stroke="#000" stroke-width="0.6" />
<rect x="253.80" y="102.40" width="4.80" height="1.50" fill="#000" />
<text class="m" transform="translate(255.15,110.10) scale(1,1.07)" font-size="6.78" fill="#000"  stroke="#000" stroke-width="0.2">s freq1</text>
<line x1="254.80" y1="85.00" x2="254.80" y2="88.60" stroke="#000" stroke-width="0.65"/>
<line x1="254.80" y1="98.60" x2="254.80" y2="102.60" stroke="#000" stroke-width="0.65"/>
<rect x="412.00" y="74.00" width="19.00" height="10.80" fill="none" stroke="#000" stroke-width="0.6" />
<rect x="411.80" y="83.50" width="4.80" height="1.50" fill="#000" />
<text class="m" transform="translate(413.15,81.50) scale(1,1.07)" font-size="6.78" fill="#000"  stroke="#000" stroke-width="0.2">r n2</text>
<rect x="434.00" y="74.40" width="102.00" height="10.60" fill="#dcdcdc" stroke="#000" stroke-width="0.6" />
<rect x="434.30" y="74.70" width="2.40" height="10.00" fill="#000" />
<rect x="433.80" y="74.20" width="4.80" height="1.50" fill="#000" />
<rect x="433.80" y="83.70" width="4.80" height="1.50" fill="#000" />
<line x1="413.00" y1="84.80" x2="435.00" y2="74.40" stroke="#000" stroke-width="0.65"/>
<polygon points="434.00,88.60 462.20,88.60 464.60,91.00 464.60,98.60 434.00,98.60" fill="none" stroke="#000" stroke-width="0.6"/>
<rect x="433.80" y="88.40" width="4.80" height="1.50" fill="#000" />
<rect x="433.80" y="97.30" width="4.80" height="1.50" fill="#000" />
<text class="m" transform="translate(435.15,96.10) scale(1,1.07)" font-size="6.78" fill="#000"  stroke="#000" stroke-width="0.2">195.998</text>
<text class="m" transform="translate(468.85,95.30) scale(1,1.07)" font-size="6.78" fill="#000"  stroke="#000" stroke-width="0.2">&lt;   center frequency in hertz</text>
<line x1="473.37" y1="92.95" x2="480.81" y2="92.95" stroke="#000" stroke-width="0.75"/>
<rect x="434.00" y="102.60" width="31.60" height="10.80" fill="none" stroke="#000" stroke-width="0.6" />
<rect x="433.80" y="102.40" width="4.80" height="1.50" fill="#000" />
<text class="m" transform="translate(435.15,110.10) scale(1,1.07)" font-size="6.78" fill="#000"  stroke="#000" stroke-width="0.2">s freq2</text>
<line x1="434.80" y1="85.00" x2="434.80" y2="88.60" stroke="#000" stroke-width="0.65"/>
<line x1="434.80" y1="98.60" x2="434.80" y2="102.60" stroke="#000" stroke-width="0.65"/>
<rect x="602.00" y="75.00" width="19.00" height="10.80" fill="none" stroke="#000" stroke-width="0.6" />
<rect x="601.80" y="84.50" width="4.80" height="1.50" fill="#000" />
<text class="m" transform="translate(603.15,82.50) scale(1,1.07)" font-size="6.78" fill="#000"  stroke="#000" stroke-width="0.2">r n3</text>
<rect x="625.00" y="74.40" width="102.00" height="10.60" fill="#dcdcdc" stroke="#000" stroke-width="0.6" />
<rect x="642.00" y="74.70" width="2.40" height="10.00" fill="#000" />
<rect x="624.80" y="74.20" width="4.80" height="1.50" fill="#000" />
<rect x="624.80" y="83.70" width="4.80" height="1.50" fill="#000" />
<line x1="603.00" y1="85.80" x2="626.00" y2="74.40" stroke="#000" stroke-width="0.65"/>
<polygon points="625.00,88.60 653.00,88.60 655.40,91.00 655.40,98.60 625.00,98.60" fill="none" stroke="#000" stroke-width="0.6"/>
<rect x="624.80" y="88.40" width="4.80" height="1.50" fill="#000" />
<rect x="624.80" y="97.30" width="4.80" height="1.50" fill="#000" />
<text class="m" transform="translate(626.15,96.10) scale(1,1.07)" font-size="6.78" fill="#000"  stroke="#000" stroke-width="0.2">493.883</text>
<text class="m" transform="translate(659.85,95.30) scale(1,1.07)" font-size="6.78" fill="#000"  stroke="#000" stroke-width="0.2">&lt;   center frequency in hertz</text>
<line x1="664.37" y1="92.95" x2="671.81" y2="92.95" stroke="#000" stroke-width="0.75"/>
<rect x="625.00" y="102.60" width="31.40" height="10.80" fill="none" stroke="#000" stroke-width="0.6" />
<rect x="624.80" y="102.40" width="4.80" height="1.50" fill="#000" />
<text class="m" transform="translate(626.15,110.10) scale(1,1.07)" font-size="6.78" fill="#000"  stroke="#000" stroke-width="0.2">s freq3</text>
<line x1="625.80" y1="85.00" x2="625.80" y2="88.60" stroke="#000" stroke-width="0.65"/>
<line x1="625.80" y1="98.60" x2="625.80" y2="102.60" stroke="#000" stroke-width="0.65"/>
<text class="m" transform="translate(511.45,135.60) scale(1,1.07)" font-size="6.78" fill="#3b3b50"  stroke="#3b3b50" stroke-width="0.2">Delay control (careful use)</text>
<text class="m" transform="translate(509.85,146.70) scale(1,1.07)" font-size="6.78" fill="#000"  stroke="#000" stroke-width="0.2">delay time</text>
<rect x="509.40" y="150.40" width="61.20" height="11.00" fill="#fcfcfc" stroke="#000" stroke-width="0.6" />
<rect x="509.70" y="150.70" width="3.20" height="10.40" fill="#000" />
<rect x="509.20" y="150.20" width="4.80" height="1.50" fill="#000" />
<rect x="509.20" y="160.10" width="4.80" height="1.50" fill="#000" />
<rect x="582.40" y="148.60" width="11.00" height="11.00" fill="#fff" stroke="#000" stroke-width="0.6" />
<line x1="583.40" y1="149.60" x2="592.40" y2="158.60" stroke="#000" stroke-width="0.7"/>
<line x1="583.40" y1="158.60" x2="592.40" y2="149.60" stroke="#000" stroke-width="0.7"/>
<rect x="582.20" y="148.40" width="4.80" height="1.50" fill="#000" />
<rect x="582.20" y="158.30" width="4.80" height="1.50" fill="#000" />
<rect x="582.40" y="164.60" width="43.00" height="10.50" fill="none" stroke="#000" stroke-width="0.6" />
<rect x="582.20" y="164.40" width="4.80" height="1.50" fill="#000" />
<rect x="620.40" y="164.40" width="4.80" height="1.50" fill="#000" />
<rect x="582.20" y="173.80" width="4.80" height="1.50" fill="#000" />
<text class="m" transform="translate(583.55,172.10) scale(1,1.07)" font-size="6.78" fill="#000"  stroke="#000" stroke-width="0.2">metro 1000</text>
<rect x="582.40" y="179.00" width="47.00" height="10.50" fill="none" stroke="#000" stroke-width="0.6" />
<rect x="582.20" y="178.80" width="4.80" height="1.50" fill="#000" />
<rect x="624.40" y="178.80" width="4.80" height="1.50" fill="#000" />
<rect x="582.20" y="188.20" width="4.80" height="1.50" fill="#000" />
<text class="m" transform="translate(583.55,186.50) scale(1,1.07)" font-size="6.78" fill="#000"  stroke="#000" stroke-width="0.2">random 5000</text>
<polygon points="582.40,194.00 611.20,194.00 608.50,196.70 608.50,201.60 611.20,204.30 582.40,204.30" fill="none" stroke="#000" stroke-width="0.6"/>
<rect x="582.20" y="193.80" width="4.80" height="1.50" fill="#000" />
<rect x="582.20" y="203.00" width="4.80" height="1.50" fill="#000" />
<text class="m" transform="translate(583.55,201.50) scale(1,1.07)" font-size="6.78" fill="#000"  stroke="#000" stroke-width="0.2">$1 100</text>
<rect x="582.40" y="208.40" width="18.80" height="10.50" fill="none" stroke="#000" stroke-width="0.6" />
<rect x="582.20" y="208.20" width="4.80" height="1.50" fill="#000" />
<rect x="589.20" y="208.20" width="4.80" height="1.50" fill="#000" />
<rect x="596.20" y="208.20" width="4.80" height="1.50" fill="#000" />
<rect x="582.20" y="217.60" width="4.80" height="1.50" fill="#000" />
<text class="m" transform="translate(583.55,215.90) scale(1,1.07)" font-size="6.78" fill="#000"  stroke="#000" stroke-width="0.2">line</text>
<polygon points="509.40,209.40 528.60,209.40 531.00,211.80 531.00,219.90 509.40,219.90" fill="none" stroke="#000" stroke-width="0.6"/>
<rect x="509.20" y="209.20" width="4.80" height="1.50" fill="#000" />
<rect x="509.20" y="218.60" width="4.80" height="1.50" fill="#000" />
<text class="m" transform="translate(510.55,216.90) scale(1,1.07)" font-size="6.78" fill="#000"  stroke="#000" stroke-width="0.2">1062</text>
<line x1="583.40" y1="159.60" x2="583.40" y2="164.60" stroke="#000" stroke-width="0.65"/>
<line x1="583.40" y1="175.10" x2="583.40" y2="179.00" stroke="#000" stroke-width="0.65"/>
<line x1="583.40" y1="189.50" x2="583.40" y2="194.00" stroke="#000" stroke-width="0.65"/>
<line x1="583.40" y1="204.30" x2="583.40" y2="208.40" stroke="#000" stroke-width="0.65"/>
<line x1="583.40" y1="218.90" x2="511.00" y2="209.40" stroke="#000" stroke-width="0.65"/>
<line x1="511.00" y1="161.40" x2="511.00" y2="209.40" stroke="#000" stroke-width="0.65"/>
<rect x="509.40" y="227.00" width="96.00" height="10.60" fill="none" stroke="#000" stroke-width="0.6" />
<rect x="509.20" y="226.80" width="4.80" height="1.50" fill="#000" />
<rect x="509.20" y="236.30" width="4.80" height="1.50" fill="#000" />
<path d="M539.38,232.90 C539.93,231.60 540.58,231.75 541.08,232.40 S542.23,233.20 542.78,231.90" fill="none" stroke="#000" stroke-width="1.00"/>
<text class="m" transform="translate(510.55,234.50) scale(1,1.07)" font-size="6.78" fill="#000"  stroke="#000" stroke-width="0.2">delread  audio-buffer 0</text>
<line x1="511.00" y1="219.90" x2="511.00" y2="227.00" stroke="#000" stroke-width="0.65"/>
<text class="m" transform="translate(549.85,249.10) scale(1,1.07)" font-size="6.78" fill="#000"  stroke="#000" stroke-width="0.2">fdbk</text>
<rect x="529.40" y="253.60" width="14.30" height="10.40" fill="none" stroke="#000" stroke-width="0.6" />
<rect x="529.20" y="253.40" width="4.80" height="1.50" fill="#000" />
<rect x="538.70" y="253.40" width="4.80" height="1.50" fill="#000" />
<rect x="529.20" y="262.70" width="4.80" height="1.50" fill="#000" />
<path d="M534.97,259.50 C535.52,258.20 536.17,258.35 536.67,259.00 S537.82,259.80 538.37,258.50" fill="none" stroke="#000" stroke-width="1.00"/>
<text class="m" transform="translate(530.55,261.10) scale(1,1.07)" font-size="6.78" fill="#000"  stroke="#000" stroke-width="0.2"><tspan dy="2.7" dx="-0.55" font-size="9">*</tspan><tspan dy="-2.7" dx="-0.8">​</tspan> </text>
<rect x="548.60" y="253.00" width="61.40" height="11.00" fill="#fcfcfc" stroke="#000" stroke-width="0.6" />
<rect x="557.60" y="253.30" width="2.40" height="10.40" fill="#000" />
<rect x="548.40" y="252.80" width="4.80" height="1.50" fill="#000" />
<rect x="548.40" y="262.70" width="4.80" height="1.50" fill="#000" />
<rect x="529.40" y="271.20" width="75.20" height="11.00" fill="none" stroke="#000" stroke-width="0.6" />
<rect x="529.20" y="271.00" width="4.80" height="1.50" fill="#000" />
<path d="M547.17,277.10 C547.72,275.80 548.37,275.95 548.87,276.60 S550.02,277.40 550.57,276.10" fill="none" stroke="#000" stroke-width="1.00"/>
<text class="m" transform="translate(530.55,278.70) scale(1,1.07)" font-size="6.78" fill="#000"  stroke="#000" stroke-width="0.2">send  feedback-sig</text>
<text class="m" transform="translate(529.25,290.70) scale(1,1.07)" font-size="6.78" fill="#000"  stroke="#000" stroke-width="0.2">del volume</text>
<rect x="509.40" y="294.60" width="14.80" height="10.50" fill="none" stroke="#000" stroke-width="0.6" />
<rect x="509.20" y="294.40" width="4.80" height="1.50" fill="#000" />
<rect x="519.20" y="294.40" width="4.80" height="1.50" fill="#000" />
<rect x="509.20" y="303.80" width="4.80" height="1.50" fill="#000" />
<path d="M514.97,300.50 C515.52,299.20 516.17,299.35 516.67,300.00 S517.82,300.80 518.37,299.50" fill="none" stroke="#000" stroke-width="1.00"/>
<text class="m" transform="translate(510.55,302.10) scale(1,1.07)" font-size="6.78" fill="#000"  stroke="#000" stroke-width="0.2"><tspan dy="2.7" dx="-0.55" font-size="9">*</tspan><tspan dy="-2.7" dx="-0.8">​</tspan> </text>
<rect x="528.00" y="295.00" width="61.40" height="10.60" fill="#fcfcfc" stroke="#000" stroke-width="0.6" />
<rect x="549.00" y="295.30" width="2.40" height="10.00" fill="#000" />
<rect x="527.80" y="294.80" width="4.80" height="1.50" fill="#000" />
<rect x="527.80" y="304.30" width="4.80" height="1.50" fill="#000" />
<line x1="511.00" y1="237.60" x2="511.00" y2="294.60" stroke="#000" stroke-width="1.3"/>
<line x1="511.00" y1="237.60" x2="530.40" y2="253.60" stroke="#000" stroke-width="1.3"/>
<line x1="530.40" y1="264.00" x2="530.40" y2="271.20" stroke="#000" stroke-width="1.3"/>
<line x1="549.20" y1="263.60" x2="543.00" y2="254.20" stroke="#000" stroke-width="0.65"/>
<line x1="528.60" y1="305.20" x2="523.40" y2="295.20" stroke="#000" stroke-width="0.65"/>
<text class="m" transform="translate(661.65,142.70) scale(1,1.07)" font-size="6.78" fill="#000"  stroke="#000" stroke-width="0.2">delay time</text>
<rect x="661.20" y="146.40" width="61.20" height="11.00" fill="#fcfcfc" stroke="#000" stroke-width="0.6" />
<rect x="661.50" y="146.70" width="3.20" height="10.40" fill="#000" />
<rect x="661.00" y="146.20" width="4.80" height="1.50" fill="#000" />
<rect x="661.00" y="156.10" width="4.80" height="1.50" fill="#000" />
<rect x="734.00" y="145.60" width="11.00" height="11.00" fill="#fff" stroke="#000" stroke-width="0.6" />
<line x1="735.00" y1="146.60" x2="744.00" y2="155.60" stroke="#000" stroke-width="0.7"/>
<line x1="735.00" y1="155.60" x2="744.00" y2="146.60" stroke="#000" stroke-width="0.7"/>
<rect x="733.80" y="145.40" width="4.80" height="1.50" fill="#000" />
<rect x="733.80" y="155.30" width="4.80" height="1.50" fill="#000" />
<rect x="734.00" y="161.00" width="43.00" height="10.50" fill="none" stroke="#000" stroke-width="0.6" />
<rect x="733.80" y="160.80" width="4.80" height="1.50" fill="#000" />
<rect x="772.00" y="160.80" width="4.80" height="1.50" fill="#000" />
<rect x="733.80" y="170.20" width="4.80" height="1.50" fill="#000" />
<text class="m" transform="translate(735.15,168.50) scale(1,1.07)" font-size="6.78" fill="#000"  stroke="#000" stroke-width="0.2">metro 1000</text>
<rect x="734.00" y="176.00" width="47.00" height="10.50" fill="none" stroke="#000" stroke-width="0.6" />
<rect x="733.80" y="175.80" width="4.80" height="1.50" fill="#000" />
<rect x="776.00" y="175.80" width="4.80" height="1.50" fill="#000" />
<rect x="733.80" y="185.20" width="4.80" height="1.50" fill="#000" />
<text class="m" transform="translate(735.15,183.50) scale(1,1.07)" font-size="6.78" fill="#000"  stroke="#000" stroke-width="0.2">random 5000</text>
<polygon points="734.00,191.40 762.80,191.40 760.10,194.10 760.10,199.00 762.80,201.70 734.00,201.70" fill="none" stroke="#000" stroke-width="0.6"/>
<rect x="733.80" y="191.20" width="4.80" height="1.50" fill="#000" />
<rect x="733.80" y="200.40" width="4.80" height="1.50" fill="#000" />
<text class="m" transform="translate(735.15,198.90) scale(1,1.07)" font-size="6.78" fill="#000"  stroke="#000" stroke-width="0.2">$1 100</text>
<rect x="734.00" y="205.40" width="18.80" height="10.50" fill="none" stroke="#000" stroke-width="0.6" />
<rect x="733.80" y="205.20" width="4.80" height="1.50" fill="#000" />
<rect x="740.80" y="205.20" width="4.80" height="1.50" fill="#000" />
<rect x="747.80" y="205.20" width="4.80" height="1.50" fill="#000" />
<rect x="733.80" y="214.60" width="4.80" height="1.50" fill="#000" />
<text class="m" transform="translate(735.15,212.90) scale(1,1.07)" font-size="6.78" fill="#000"  stroke="#000" stroke-width="0.2">line</text>
<polygon points="661.20,205.00 680.40,205.00 682.80,207.40 682.80,215.50 661.20,215.50" fill="none" stroke="#000" stroke-width="0.6"/>
<rect x="661.00" y="204.80" width="4.80" height="1.50" fill="#000" />
<rect x="661.00" y="214.20" width="4.80" height="1.50" fill="#000" />
<text class="m" transform="translate(662.35,212.50) scale(1,1.07)" font-size="6.78" fill="#000"  stroke="#000" stroke-width="0.2">1016</text>
<line x1="735.00" y1="156.60" x2="735.00" y2="161.00" stroke="#000" stroke-width="0.65"/>
<line x1="735.00" y1="171.50" x2="735.00" y2="176.00" stroke="#000" stroke-width="0.65"/>
<line x1="735.00" y1="186.50" x2="735.00" y2="191.40" stroke="#000" stroke-width="0.65"/>
<line x1="735.00" y1="201.70" x2="735.00" y2="205.40" stroke="#000" stroke-width="0.65"/>
<line x1="735.00" y1="215.90" x2="662.80" y2="205.00" stroke="#000" stroke-width="0.65"/>
<line x1="662.80" y1="157.40" x2="662.80" y2="205.00" stroke="#000" stroke-width="0.65"/>
<rect x="661.20" y="226.00" width="100.20" height="10.60" fill="none" stroke="#000" stroke-width="0.6" />
<rect x="661.00" y="225.80" width="4.80" height="1.50" fill="#000" />
<rect x="661.00" y="235.30" width="4.80" height="1.50" fill="#000" />
<path d="M691.18,231.90 C691.73,230.60 692.38,230.75 692.88,231.40 S694.03,232.20 694.58,230.90" fill="none" stroke="#000" stroke-width="1.00"/>
<text class="m" transform="translate(662.35,233.50) scale(1,1.07)" font-size="6.78" fill="#000"  stroke="#000" stroke-width="0.2">delread  Raudio-buffer 0</text>
<line x1="662.80" y1="215.50" x2="662.80" y2="226.00" stroke="#000" stroke-width="0.65"/>
<text class="m" transform="translate(697.85,249.10) scale(1,1.07)" font-size="6.78" fill="#000"  stroke="#000" stroke-width="0.2">fdbk</text>
<rect x="676.60" y="253.60" width="14.30" height="10.40" fill="none" stroke="#000" stroke-width="0.6" />
<rect x="676.40" y="253.40" width="4.80" height="1.50" fill="#000" />
<rect x="685.90" y="253.40" width="4.80" height="1.50" fill="#000" />
<rect x="676.40" y="262.70" width="4.80" height="1.50" fill="#000" />
<path d="M682.17,259.50 C682.72,258.20 683.37,258.35 683.87,259.00 S685.02,259.80 685.57,258.50" fill="none" stroke="#000" stroke-width="1.00"/>
<text class="m" transform="translate(677.75,261.10) scale(1,1.07)" font-size="6.78" fill="#000"  stroke="#000" stroke-width="0.2"><tspan dy="2.7" dx="-0.55" font-size="9">*</tspan><tspan dy="-2.7" dx="-0.8">​</tspan> </text>
<rect x="696.60" y="253.00" width="61.40" height="11.00" fill="#fcfcfc" stroke="#000" stroke-width="0.6" />
<rect x="702.40" y="253.30" width="2.40" height="10.40" fill="#000" />
<rect x="696.40" y="252.80" width="4.80" height="1.50" fill="#000" />
<rect x="696.40" y="262.70" width="4.80" height="1.50" fill="#000" />
<rect x="676.60" y="271.20" width="79.40" height="11.00" fill="none" stroke="#000" stroke-width="0.6" />
<rect x="676.40" y="271.00" width="4.80" height="1.50" fill="#000" />
<path d="M694.37,277.10 C694.92,275.80 695.57,275.95 696.07,276.60 S697.22,277.40 697.77,276.10" fill="none" stroke="#000" stroke-width="1.00"/>
<text class="m" transform="translate(677.75,278.70) scale(1,1.07)" font-size="6.78" fill="#000"  stroke="#000" stroke-width="0.2">send  Rfeedback-sig</text>
<text class="m" transform="translate(679.85,290.70) scale(1,1.07)" font-size="6.78" fill="#000"  stroke="#000" stroke-width="0.2">del volume</text>
<rect x="661.20" y="295.00" width="14.80" height="10.50" fill="none" stroke="#000" stroke-width="0.6" />
<rect x="661.00" y="294.80" width="4.80" height="1.50" fill="#000" />
<rect x="671.00" y="294.80" width="4.80" height="1.50" fill="#000" />
<rect x="661.00" y="304.20" width="4.80" height="1.50" fill="#000" />
<path d="M666.77,300.90 C667.32,299.60 667.97,299.75 668.47,300.40 S669.62,301.20 670.17,299.90" fill="none" stroke="#000" stroke-width="1.00"/>
<text class="m" transform="translate(662.35,302.50) scale(1,1.07)" font-size="6.78" fill="#000"  stroke="#000" stroke-width="0.2"><tspan dy="2.7" dx="-0.55" font-size="9">*</tspan><tspan dy="-2.7" dx="-0.8">​</tspan> </text>
<rect x="679.40" y="295.00" width="61.40" height="10.60" fill="#fcfcfc" stroke="#000" stroke-width="0.6" />
<rect x="696.60" y="295.30" width="2.40" height="10.00" fill="#000" />
<rect x="679.20" y="294.80" width="4.80" height="1.50" fill="#000" />
<rect x="679.20" y="304.30" width="4.80" height="1.50" fill="#000" />
<line x1="662.80" y1="236.60" x2="662.80" y2="295.00" stroke="#000" stroke-width="1.3"/>
<line x1="662.80" y1="236.60" x2="677.60" y2="253.60" stroke="#000" stroke-width="1.3"/>
<line x1="677.60" y1="264.00" x2="677.60" y2="271.20" stroke="#000" stroke-width="1.3"/>
<line x1="697.20" y1="263.60" x2="690.20" y2="254.20" stroke="#000" stroke-width="0.65"/>
<line x1="680.00" y1="305.20" x2="675.20" y2="295.60" stroke="#000" stroke-width="0.65"/>
<rect x="508.00" y="335.60" width="35.40" height="10.80" fill="none" stroke="#000" stroke-width="0.6" />
<rect x="507.80" y="345.10" width="4.80" height="1.50" fill="#000" />
<text class="m" transform="translate(509.15,343.10) scale(1,1.07)" font-size="6.78" fill="#000"  stroke="#000" stroke-width="0.2">loadbang</text>
<rect x="508.00" y="353.40" width="11.60" height="11.00" fill="#dcdcdc" stroke="#000" stroke-width="0.6" />
<line x1="509.00" y1="354.40" x2="518.60" y2="363.40" stroke="#000" stroke-width="0.7"/>
<line x1="509.00" y1="363.40" x2="518.60" y2="354.40" stroke="#000" stroke-width="0.7"/>
<rect x="507.80" y="353.20" width="4.80" height="1.50" fill="#000" />
<rect x="507.80" y="363.10" width="4.80" height="1.50" fill="#000" />
<text class="m" transform="translate(523.25,360.60) scale(1,1.07)" font-size="6.78" fill="#000"  stroke="#000" stroke-width="0.2">&lt;   on/off</text>
<line x1="527.77" y1="358.25" x2="535.21" y2="358.25" stroke="#000" stroke-width="0.75"/>
<rect x="508.00" y="372.60" width="43.40" height="11.00" fill="none" stroke="#000" stroke-width="0.6" />
<rect x="507.80" y="372.40" width="4.80" height="1.50" fill="#000" />
<rect x="546.40" y="372.40" width="4.80" height="1.50" fill="#000" />
<rect x="507.80" y="382.30" width="4.80" height="1.50" fill="#000" />
<text class="m" transform="translate(509.15,380.10) scale(1,1.07)" font-size="6.78" fill="#000"  stroke="#000" stroke-width="0.2">metro 1000</text>
<rect x="508.00" y="389.00" width="23.00" height="10.60" fill="none" stroke="#000" stroke-width="0.6" />
<rect x="507.80" y="388.80" width="4.80" height="1.50" fill="#000" />
<rect x="507.80" y="398.30" width="4.80" height="1.50" fill="#000" />
<rect x="526.00" y="398.30" width="4.80" height="1.50" fill="#000" />
<text class="m" transform="translate(509.15,396.50) scale(1,1.07)" font-size="6.78" fill="#000"  stroke="#000" stroke-width="0.2">t b b</text>
<rect x="508.00" y="405.60" width="31.40" height="10.80" fill="none" stroke="#000" stroke-width="0.6" />
<rect x="507.80" y="405.40" width="4.80" height="1.50" fill="#000" />
<rect x="534.40" y="405.40" width="4.80" height="1.50" fill="#000" />
<rect x="507.80" y="415.10" width="4.80" height="1.50" fill="#000" />
<text class="m" transform="translate(509.15,413.10) scale(1,1.07)" font-size="6.78" fill="#000"  stroke="#000" stroke-width="0.2">cputime</text>
<rect x="508.00" y="422.40" width="14.60" height="10.60" fill="none" stroke="#000" stroke-width="0.6" />
<rect x="507.80" y="422.20" width="4.80" height="1.50" fill="#000" />
<rect x="517.60" y="422.20" width="4.80" height="1.50" fill="#000" />
<rect x="507.80" y="431.70" width="4.80" height="1.50" fill="#000" />
<text class="m" transform="translate(509.15,429.90) scale(1,1.07)" font-size="6.78" fill="#000"  stroke="#000" stroke-width="0.2">int</text>
<rect x="508.00" y="440.00" width="23.00" height="10.60" fill="none" stroke="#000" stroke-width="0.6" />
<rect x="507.80" y="439.80" width="4.80" height="1.50" fill="#000" />
<rect x="526.00" y="439.80" width="4.80" height="1.50" fill="#000" />
<rect x="507.80" y="449.30" width="4.80" height="1.50" fill="#000" />
<text class="m" transform="translate(509.15,447.50) scale(1,1.07)" font-size="6.78" fill="#000"  stroke="#000" stroke-width="0.2"><tspan dy="2.7" dx="-0.55" font-size="9">*</tspan><tspan dy="-2.7" dx="-0.8">​</tspan> 0.1</text>
<polygon points="508.00,456.00 527.60,456.00 530.00,458.40 530.00,466.60 508.00,466.60" fill="none" stroke="#000" stroke-width="0.6"/>
<rect x="507.80" y="455.80" width="4.80" height="1.50" fill="#000" />
<rect x="507.80" y="465.30" width="4.80" height="1.50" fill="#000" />
<text class="m" transform="translate(509.15,463.50) scale(1,1.07)" font-size="6.78" fill="#000"  stroke="#000" stroke-width="0.2">11</text>
<text class="m" transform="translate(536.85,465.50) scale(1,1.07)" font-size="6.78" fill="#000"  stroke="#000" stroke-width="0.2">CPU load in percent</text>
<line x1="509.00" y1="346.40" x2="509.00" y2="353.40" stroke="#000" stroke-width="0.65"/>
<line x1="509.00" y1="364.40" x2="509.00" y2="372.60" stroke="#000" stroke-width="0.65"/>
<line x1="509.00" y1="383.60" x2="509.00" y2="389.00" stroke="#000" stroke-width="0.65"/>
<line x1="509.00" y1="399.60" x2="509.00" y2="405.60" stroke="#000" stroke-width="0.65"/>
<line x1="509.00" y1="416.40" x2="509.00" y2="422.40" stroke="#000" stroke-width="0.65"/>
<line x1="509.00" y1="433.00" x2="509.00" y2="440.00" stroke="#000" stroke-width="0.65"/>
<line x1="509.00" y1="450.60" x2="509.00" y2="456.00" stroke="#000" stroke-width="0.65"/>
<line x1="529.60" y1="399.60" x2="538.20" y2="405.60" stroke="#000" stroke-width="0.65"/>
</svg>
</body></html>
